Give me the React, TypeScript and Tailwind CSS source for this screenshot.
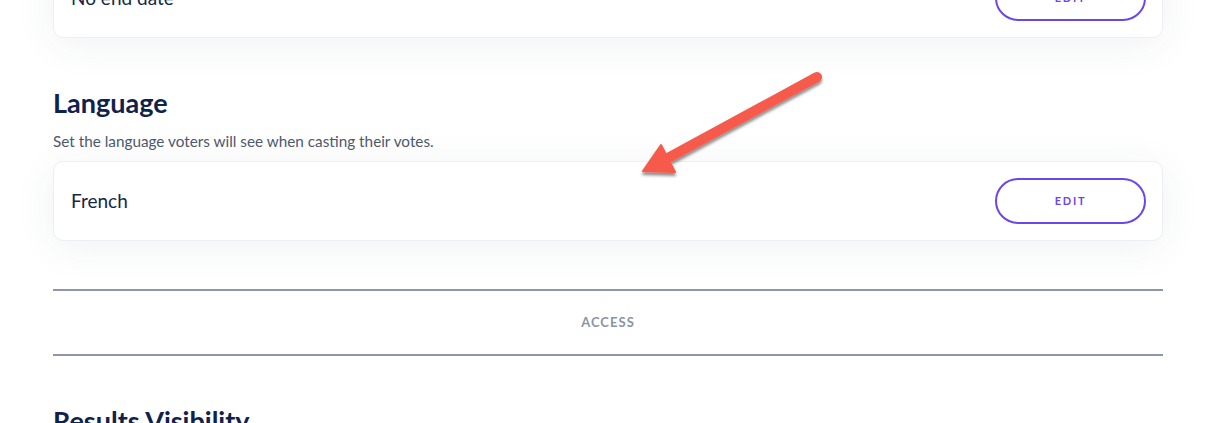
import React from "react";

const font = { fontFamily: "Lato, 'Open Sans', sans-serif" };

function SettingCard({ value }: { value: string }) {
  return (
    <div className="flex h-[80px] items-center justify-between rounded-[10px] border border-[#eceef3] bg-white pl-[17px] pr-[16px] shadow-[0_6px_40px_rgba(40,50,90,0.07)]">
      <span className="text-[19px] text-[#15264a]">{value}</span>
      <button className="flex h-[46px] w-[151px] items-center justify-center rounded-full border-2 border-[#6d46ea] text-[11px] font-bold tracking-[0.16em] text-[#6d46ea]">
        EDIT
      </button>
    </div>
  );
}

function Arrow() {
  return (
    <svg
      className="pointer-events-none absolute left-0 top-0"
      width="1225"
      height="423"
      viewBox="0 0 1225 423"
    >
      <defs>
        <filter id="sh" x="-20%" y="-20%" width="140%" height="140%">
          <feDropShadow dx="0" dy="3" stdDeviation="1.6" floodColor="#000" floodOpacity="0.45" />
        </filter>
      </defs>
      <g filter="url(#sh)" fill="#f65a4c" stroke="#f65a4c">
        <line x1="817" y1="77" x2="668" y2="158" strokeWidth="10" strokeLinecap="round" />
        <polygon points="643,171 661,145 675,172" strokeWidth="2" strokeLinejoin="round" />
      </g>
    </svg>
  );
}

export default function App() {
  return (
    <div className="relative h-[423px] w-[1225px] overflow-hidden bg-white" style={font}>
      <div className="ml-[53px] w-[1110px]">
        <div className="-mt-[42px]">
          <SettingCard value="No end date" />
        </div>

        <h2 className="mt-[48px] text-[27px] font-bold leading-[34px] text-[#10224a]">Language</h2>
        <p className="mt-[11px] text-[15.3px] leading-[20px] text-[#4d586d]">
          Set the language voters will see when casting their votes.
        </p>
        <div className="mt-[10px]">
          <SettingCard value="French" />
        </div>

        <div className="mt-[48px] flex h-[67px] items-center justify-center border-y-2 border-[#8d97a9]">
          <span className="text-[13px] font-bold tracking-[0.08em] text-[#8a93a6]">ACCESS</span>
        </div>

        <h2 className="mt-[48px] text-[27px] font-bold leading-[34px] text-[#10224a]">Results Visibility</h2>
      </div>
      <Arrow />
    </div>
  );
}
